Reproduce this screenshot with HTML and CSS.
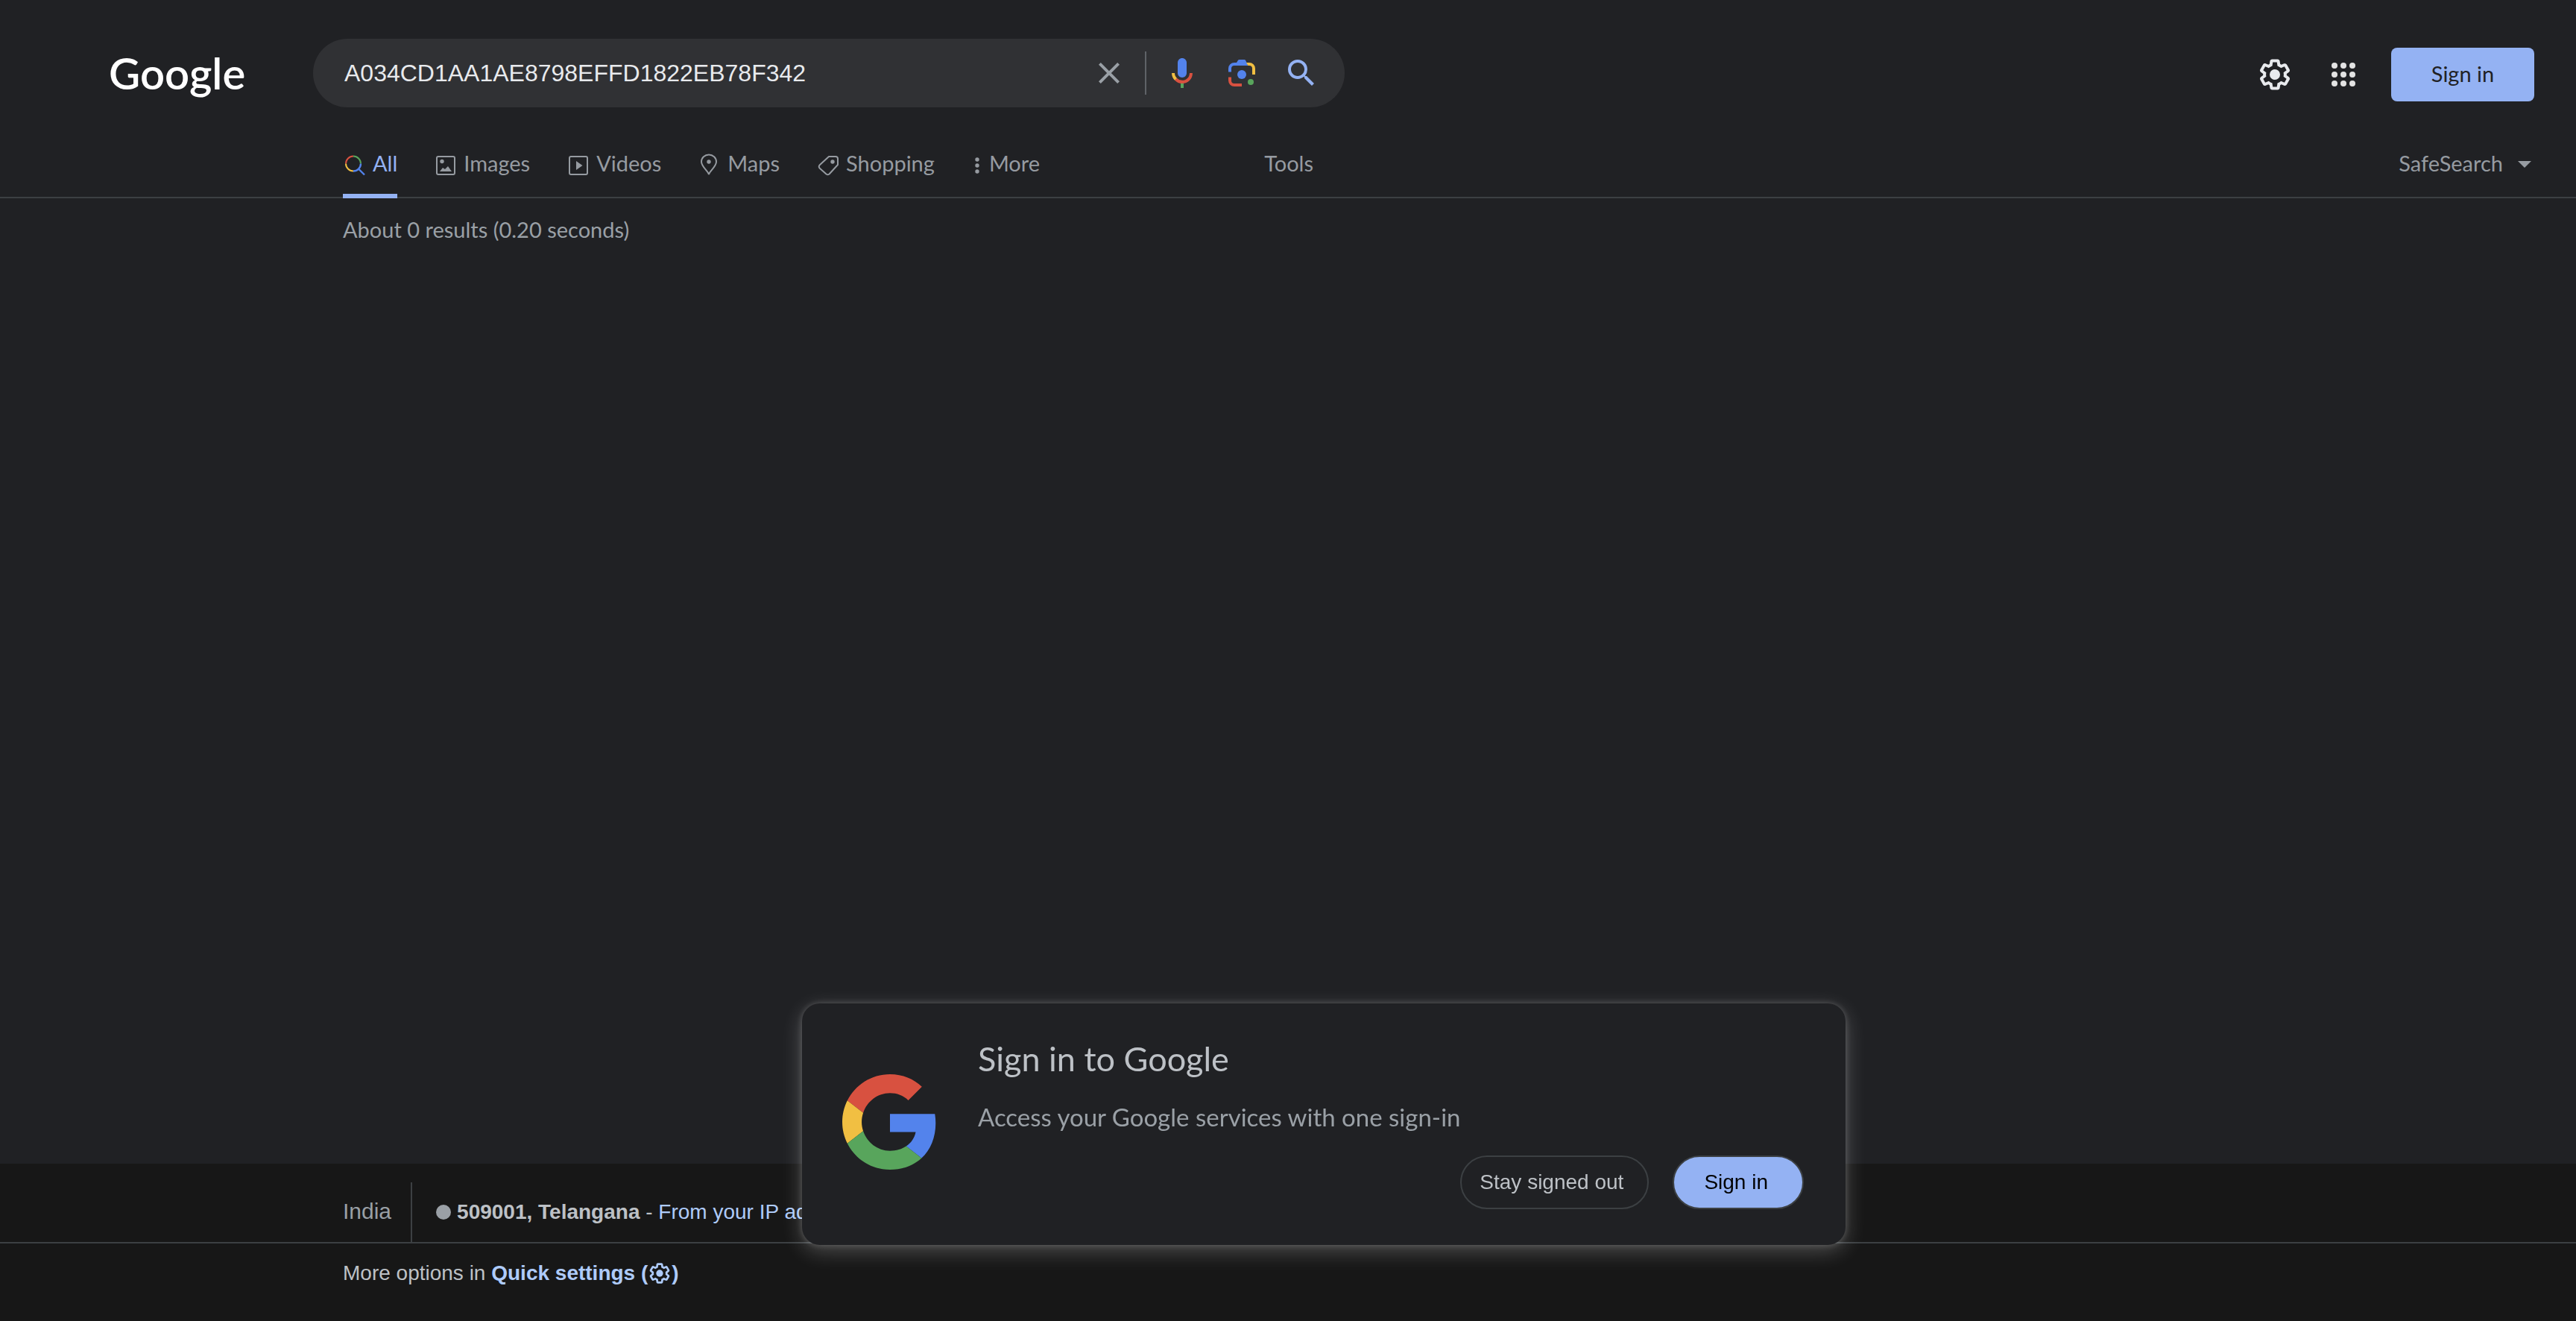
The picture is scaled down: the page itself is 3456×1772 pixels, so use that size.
FILE: index.html
```html
<!DOCTYPE html>
<html lang="en">
<head>
<meta charset="utf-8">
<title>A034CD1AA1AE8798EFFD1822EB78F342 - Google Search</title>
<link rel="stylesheet" href="styles.css">
</head>
<body>
<svg class="symbols" aria-hidden="true">
  <symbol id="gear" viewBox="0 0 24 24">
    <path d="M13.85 22.25h-3.7c-.74 0-1.36-.54-1.45-1.27l-.27-1.89c-.27-.14-.53-.29-.79-.46l-1.8.72c-.7.26-1.47-.03-1.81-.65L2.2 15.53c-.35-.66-.2-1.44.36-1.88l1.53-1.19c-.01-.15-.02-.3-.02-.46 0-.15.01-.31.02-.46l-1.52-1.19c-.59-.45-.74-1.26-.37-1.88l1.85-3.19c.34-.62 1.11-.9 1.79-.63l1.81.73c.26-.17.52-.32.78-.46l.27-1.91c.09-.7.71-1.25 1.44-1.25h3.7c.74 0 1.36.54 1.45 1.27l.27 1.89c.27.14.53.29.79.46l1.8-.72c.71-.26 1.48.03 1.82.65l1.84 3.18c.36.66.2 1.44-.36 1.88l-1.52 1.19c.01.15.02.3.02.46s-.01.31-.02.46l1.52 1.19c.56.45.72 1.23.37 1.86l-1.86 3.22c-.34.62-1.11.9-1.8.63l-1.8-.72c-.26.17-.52.32-.78.46l-.27 1.91c-.1.68-.72 1.22-1.46 1.22zm-3.23-2h2.76l.37-2.55.53-.22c.44-.18.88-.44 1.34-.78l.45-.34 2.38.96 1.38-2.4-2.03-1.58.07-.56c.03-.26.06-.51.06-.78s-.03-.53-.06-.78l-.07-.56 2.03-1.58-1.39-2.4-2.39.96-.45-.35c-.42-.32-.87-.58-1.33-.77l-.52-.22-.37-2.55h-2.76l-.37 2.55-.53.21c-.44.19-.88.44-1.34.79l-.45.33-2.38-.95-1.39 2.39 2.03 1.58-.07.56a7 7 0 0 0-.06.79c0 .26.02.53.06.78l.07.56-2.03 1.58 1.38 2.4 2.39-.96.45.35c.43.33.86.58 1.33.77l.53.22.38 2.55z"/>
    <circle cx="12" cy="12" r="3.5"/>
  </symbol>
</svg>

<header class="header">
  <a class="logo" href="#">Google</a>
  <form class="search" role="search">
    <input class="search-input" type="text" aria-label="Search" value="A034CD1AA1AE8798EFFD1822EB78F342" spellcheck="false">
    <button class="search-btn clear-btn" type="button" aria-label="Clear">
      <svg class="icon-48" viewBox="0 0 24 24" fill="#9aa0a6"><path d="M19 6.41L17.59 5 12 10.59 6.41 5 5 6.41 10.59 12 5 17.59 6.41 19 12 13.41 17.59 19 19 17.59 13.41 12z"/></svg>
    </button>
    <span class="divider"></span>
    <button class="search-btn" type="button" aria-label="Search by voice">
      <svg class="icon-48" viewBox="0 0 24 24">
        <path fill="#5383ec" d="M12 15c1.66 0 3-1.31 3-2.97V5.01C15 3.35 13.66 2 12 2S9 3.34 9 5.01v7.02C9 13.69 10.34 15 12 15z"/>
        <path fill="#58a55c" d="M11 18.08h2V22h-2z"/>
        <path fill="#f1bf42" d="M7.05 16.87C5.78 15.54 5 14.04 5 12h2c0 1.45.56 2.42 1.47 3.38v.32l-1.15 1.18z"/>
        <path fill="#d85140" d="M12 16.93a4.97 5.25 0 0 1-3.54-1.55l-1.41 1.49C8.31 18.21 10.07 19 12 19c3.87 0 6.99-2.92 6.99-7H17c0 2.92-2.24 4.93-5 4.93z"/>
      </svg>
    </button>
    <button class="search-btn" type="button" aria-label="Search by image">
      <svg class="icon-48" viewBox="0 0 24 24">
        <path fill="#5383ec" d="M3 11.3V9a4 4 0 0 1 4-4h1.5l1-1.6c.2-.3.5-.4.8-.4h3.4c.3 0 .6.1.8.4L16.2 7H7a2 2 0 0 0-2 2v2.3z"/>
        <path fill="#f1bf42" d="M15 5h2a4 4 0 0 1 4 4v4h-2V9a2 2 0 0 0-2-2h-.8z"/>
        <path fill="#d85140" d="M3 14.7V17a4 4 0 0 0 4 4h5v-2H7a2 2 0 0 1-2-2v-2.3z"/>
        <circle cx="12" cy="13" r="3" fill="#5383ec"/>
        <circle cx="18" cy="18" r="2" fill="#58a55c"/>
      </svg>
    </button>
    <button class="search-btn" type="submit" aria-label="Google Search">
      <svg class="icon-48" viewBox="0 0 24 24" fill="#94b2f3"><path d="M15.5 14h-.79l-.28-.27A6.47 6.47 0 0 0 16 9.5 6.5 6.5 0 1 0 9.5 16c1.61 0 3.09-.59 4.23-1.57l.27.28v.79l5 4.99L20.49 19l-4.99-5zm-6 0C7.01 14 5 11.99 5 9.5S7.01 5 9.5 5 14 7.01 14 9.5 11.99 14 9.5 14z"/></svg>
    </button>
  </form>
  <div class="account">
    <button class="account-btn" type="button" aria-label="Quick settings"><svg class="icon-48" fill="#e8eaed"><use href="#gear"/></svg></button>
    <button class="account-btn" type="button" aria-label="Google apps">
      <svg class="icon-48" viewBox="0 0 24 24" fill="#e3e3e3">
        <circle cx="6" cy="6" r="2"/><circle cx="12" cy="6" r="2"/><circle cx="18" cy="6" r="2"/>
        <circle cx="6" cy="12" r="2"/><circle cx="12" cy="12" r="2"/><circle cx="18" cy="12" r="2"/>
        <circle cx="6" cy="18" r="2"/><circle cx="12" cy="18" r="2"/><circle cx="18" cy="18" r="2"/>
      </svg>
    </button>
    <a class="signin" href="#">Sign in</a>
  </div>
</header>

<nav class="tabs">
  <div class="tabs-main">
    <a class="tab tab-active" href="#">
      <svg class="tab-icon" viewBox="0 0 32 32" fill="none" stroke-width="2">
        <path stroke="#d85140" d="M4 15.5A10 10 0 0 1 14 5.5"/>
        <path stroke="#58a55c" d="M14 5.5a10 10 0 0 1 10 10"/>
        <path stroke="#f1bf42" d="M4 15.5A10 10 0 0 0 14 25.5"/>
        <path stroke="#5383ec" d="M14 25.5A10 10 0 0 0 24 15.5M21 22.5l8 8" stroke-width="2.4"/>
      </svg>
      <span>All</span>
    </a>
    <a class="tab" href="#">
      <svg class="tab-icon" viewBox="0 0 32 32" fill="currentColor">
        <rect x="4" y="6" width="24" height="24" rx="2" fill="none" stroke="currentColor" stroke-width="2"/>
        <circle cx="11" cy="12.5" r="2.7"/><path d="M8 26l4-5 3 2 4-4 5 7z"/>
      </svg>
      <span>Images</span>
    </a>
    <a class="tab" href="#">
      <svg class="tab-icon" viewBox="0 0 32 32" fill="currentColor">
        <rect x="4" y="6" width="24" height="24" rx="2" fill="none" stroke="currentColor" stroke-width="2"/>
        <path d="M13 12l8.5 6-8.5 6z"/>
      </svg>
      <span>Videos</span>
    </a>
    <a class="tab" href="#">
      <svg class="tab-icon" viewBox="0 0 32 32" fill="currentColor">
        <path d="M15 30C14 25.5 5 19.5 5 13a10 9.500 0 0 1 20 0C25 19.5 16 25.5 15 30z" fill="none" stroke="currentColor" stroke-width="2"/>
        <circle cx="15" cy="13" r="2.7"/>
      </svg>
      <span>Maps</span>
    </a>
    <a class="tab" href="#">
      <svg class="tab-icon" viewBox="0 0 32 32" fill="currentColor">
        <path d="M17 6h9q3 0 3 3v8L17.5 29.5q-2 1.5-4 0L4.5 21.5q-1.5-2 0-4z" fill="none" stroke="currentColor" stroke-width="2" stroke-linejoin="round"/>
        <circle cx="22" cy="13" r="2.7"/>
      </svg>
      <span>Shopping</span>
    </a>
    <a class="tab" href="#">
      <svg class="more-icon" viewBox="0 0 16 32" fill="currentColor"><circle cx="8" cy="10" r="2.7"/><circle cx="8" cy="18" r="2.7"/><circle cx="8" cy="26" r="2.7"/></svg>
      <span>More</span>
    </a>
    <a class="tab tools" href="#">Tools</a>
  </div>
  <a class="tab safesearch" href="#"><span>SafeSearch</span>
    <svg class="caret" viewBox="0 0 18 10" fill="currentColor"><path d="M0 0h18L9 9z"/></svg>
  </a>
</nav>

<main class="results"><p class="stats">About 0 results (0.20 seconds)</p></main>

<footer class="footer">
  <div class="location">
    <span class="country">India</span>
    <div class="place"><span class="dot"></span><span><b>509001, Telangana</b> - <a href="#">From your IP address</a></span></div>
  </div>
  <p class="options">More options in <a class="quick" href="#">Quick settings (<svg class="icon-inline"><use href="#gear"/></svg>)</a></p>
</footer>

<section class="dialog" role="dialog" aria-labelledby="dialog-title">
  <svg class="g-logo" viewBox="0 0 48 48">
    <path fill="#d85140" d="M24 9.5c3.54 0 6.71 1.22 9.21 3.6l6.85-6.85C35.9 2.38 30.47 0 24 0 14.62 0 6.51 5.38 2.56 13.22l7.98 6.19C12.43 13.72 17.74 9.5 24 9.5z"/>
    <path fill="#5383ec" d="M46.98 24.55c0-1.57-.15-3.09-.38-4.55H24v9.02h12.94c-.58 2.96-2.26 5.48-4.78 7.18l7.73 6c4.51-4.18 7.09-10.36 7.09-17.65z"/>
    <path fill="#f1bf42" d="M10.53 28.59c-.48-1.45-.76-2.99-.76-4.59s.27-3.14.76-4.59l-7.98-6.19C.92 16.46 0 20.12 0 24c0 3.88.92 7.54 2.56 10.78l7.97-6.19z"/>
    <path fill="#58a55c" d="M24 48c6.48 0 11.93-2.13 15.89-5.81l-7.73-6c-2.15 1.45-4.92 2.3-8.16 2.3-6.26 0-11.57-4.22-13.47-9.91l-7.98 6.19C6.51 42.62 14.62 48 24 48z"/>
  </svg>
  <div class="dialog-body">
    <h2 class="dialog-title" id="dialog-title">Sign in to Google</h2>
    <p class="dialog-text">Access your Google services with one sign-in</p>
    <div class="dialog-actions">
      <button class="pill" type="button">Stay signed out</button>
      <button class="pill pill-primary" type="button">Sign in</button>
    </div>
  </div>
</section>
</body>
</html>
```
FILE: styles.css
```css
* { box-sizing: border-box; }

body {
  display: flex;
  flex-direction: column;
  min-height: 100vh;
  margin: 0;
  background: #202124;
  color: #bdc1c6;
  font-family: "Liberation Sans", Arial, sans-serif;
  font-size: 28px;
  line-height: 32px;
}

a { color: #aecbfa; text-decoration: none; }
p, h2 { margin: 0; }
button { padding: 0; border: 0; background: none; font: inherit; cursor: pointer; }
svg { display: block; flex: none; }
.symbols { position: absolute; width: 0; height: 0; }
.icon-48 { width: 48px; height: 48px; }

.header {
  display: flex;
  align-items: center;
  padding: 52px 56px 0 146px;
}

.logo {
  flex: none;
  width: 274px;
  color: #fff;
  font: 600 58px/72px Lato, sans-serif;
}

.search {
  display: flex;
  align-items: center;
  flex: 0 1 1384px;
  height: 92px;
  padding: 0 34px 0 42px;
  border-radius: 46px;
  background: #303134;
}

.search-input {
  flex: 1;
  min-width: 0;
  padding: 0;
  border: 0;
  outline: 0;
  background: none;
  color: #e8eaed;
  font: 32px/40px "Liberation Sans", Arial, sans-serif;
}

.search-btn { margin-left: 32px; }
.clear-btn { margin: 0 24px 0 0; }
.divider { width: 2px; height: 58px; margin-right: -8px; background: #5f6368; }

.account {
  display: flex;
  align-items: center;
  margin-left: auto;
  padding-top: 4px;
}

.account-btn { margin-left: 44px; }

.signin {
  width: 192px;
  height: 72px;
  margin-left: 40px;
  border-radius: 8px;
  background: #94b2f3;
  color: #202124;
  font: 29px/70px Lato, sans-serif;
  text-align: center;
}

.tabs {
  display: flex;
  justify-content: space-between;
  height: 122px;
  padding: 52px 60px 0 460px;
  border-bottom: 2px solid #3c4043;
  font: 29px/30px Lato, sans-serif;
}

.tabs-main { display: flex; flex: 0 1 1302px; gap: 49px; }

.tab {
  display: flex;
  gap: 8px;
  height: 70px;
  padding-top: 8px;
  color: #969ba1;
}

.tab-active { border-bottom: 6px solid #94b2f3; color: #94b2f3; }
.tab-icon { width: 32px; height: 32px; }
.more-icon { width: 16px; height: 32px; }
.tools { margin-left: auto; }
.safesearch { gap: 20px; }
.caret { width: 18px; height: 10px; margin-top: 12px; }

.results { flex: 1; padding: 26px 460px; }
.stats { color: #9aa0a6; font: 29px/32px Lato, sans-serif; }

.footer { background: #171717; }

.location {
  display: flex;
  height: 107px;
  padding: 25px 460px 0;
  border-bottom: 2px solid #3c4043;
}

.country {
  padding: 23px 26px 0 0;
  border-right: 2px solid #3c4043;
  color: #9aa0a6;
  font-size: 30px;
}

.place {
  display: flex;
  align-items: center;
  gap: 8px;
  padding-left: 32px;
}

.dot { width: 20px; height: 20px; border-radius: 50%; background: #9aa0a6; }

.options { padding: 24px 460px 48px; }
.quick { font-weight: bold; }
.icon-inline { display: inline-block; width: 32px; height: 32px; margin: -4px 0; fill: currentColor; vertical-align: -3px; }

.dialog {
  position: fixed;
  bottom: 102px;
  left: calc(50% - 652px);
  display: flex;
  gap: 54px;
  width: 1400px;
  padding: 46px 56px 48px 54px;
  border-radius: 24px;
  background: #202124;
  box-shadow: 0 0 8px rgba(255, 255, 255, .2), 0 8px 28px rgba(255, 255, 255, .24);
}

.g-logo { width: 128px; height: 128px; margin-top: 49px; }
.dialog-body { flex: 1; }
.dialog-title { font: 45px/56px Lato, sans-serif; }
.dialog-text { margin-top: 30px; color: #9aa0a6; font: 33px/40px Lato, sans-serif; }

.dialog-actions {
  display: flex;
  justify-content: flex-end;
  gap: 32px;
  margin-top: 32px;
}

.pill {
  height: 72px;
  padding: 0 32px 0 24px;
  border: 2px solid #3c4043;
  border-radius: 36px;
  color: #bdc1c6;
}

.pill-primary { padding: 0 46px 0 40px; background: #94b2f3; color: #000; }
```
